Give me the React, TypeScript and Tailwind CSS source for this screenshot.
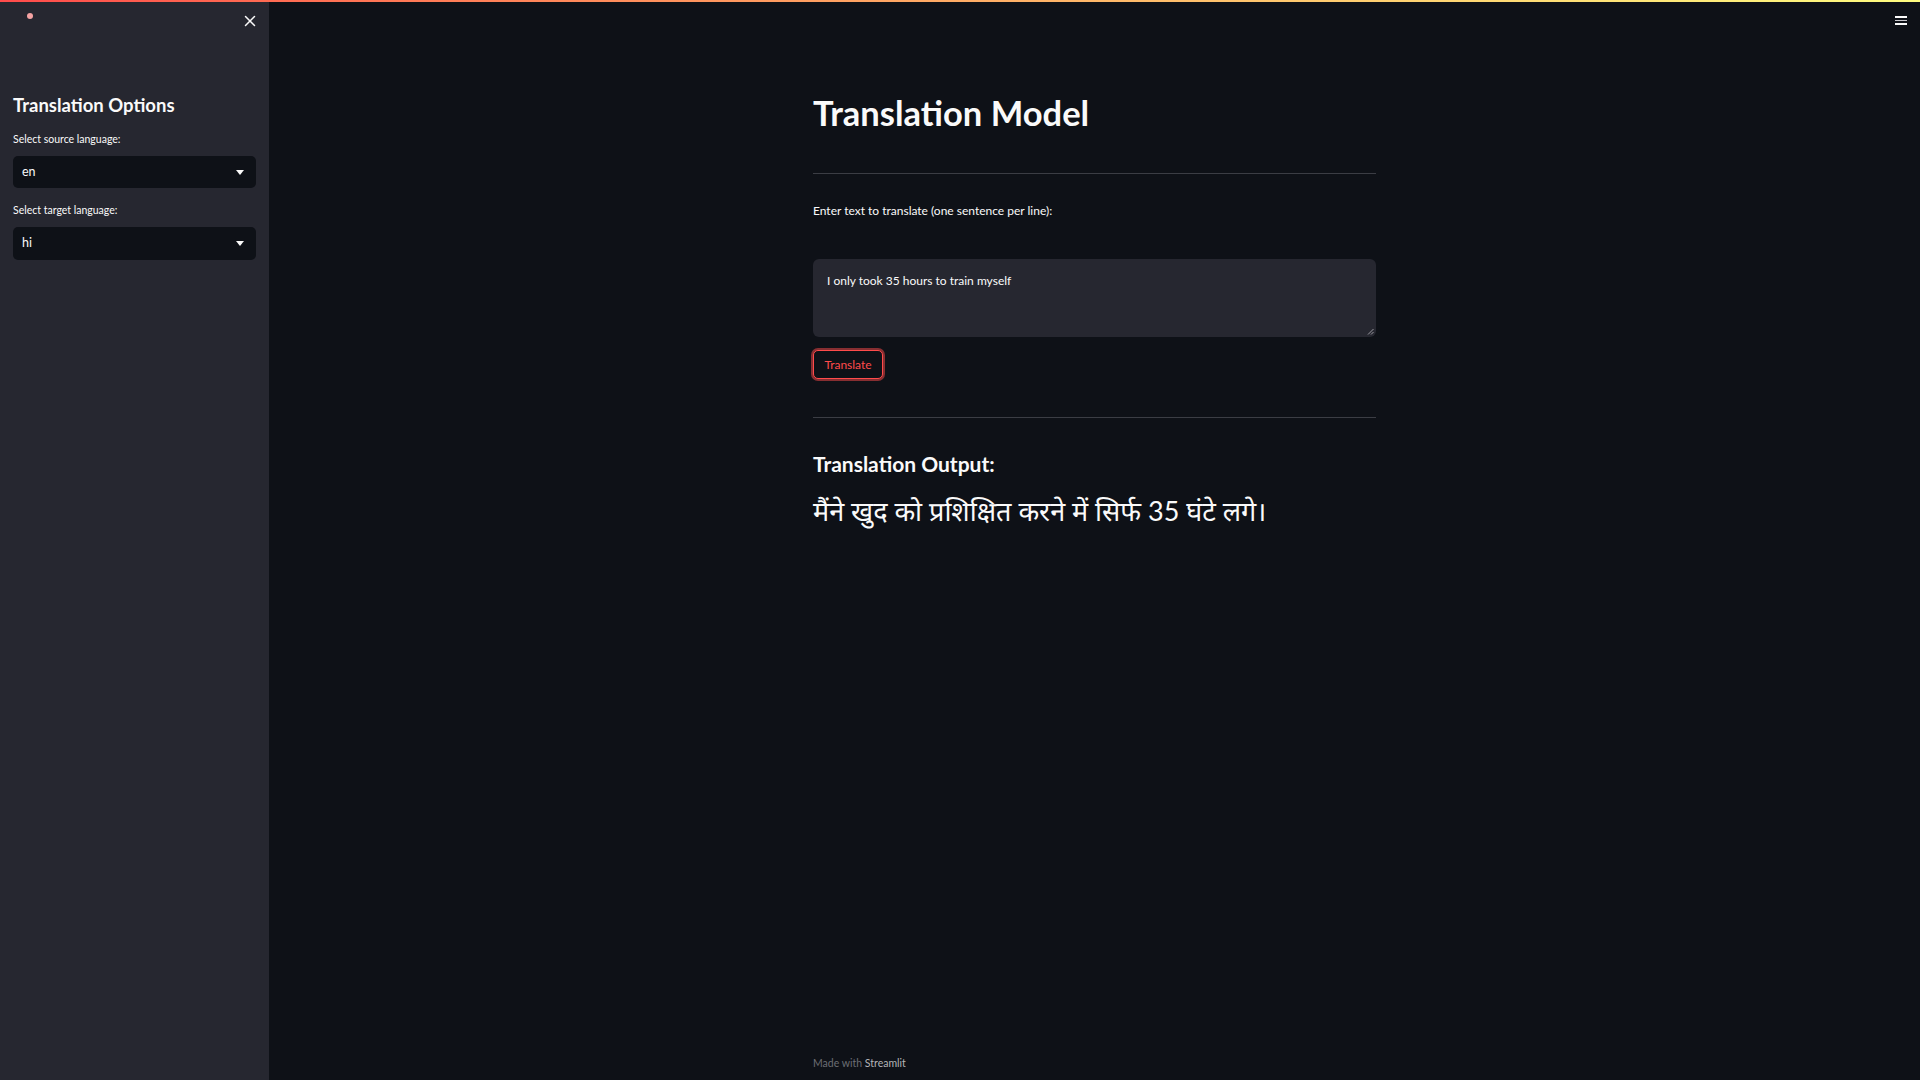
import { X } from 'lucide-react';

const FONT = "font-['Lato','Noto_Sans_Devanagari','Noto_Sans',sans-serif]";

function SelectBox({ value, tall }: { value: string; tall?: boolean }) {
  return (
    <div
      className={`flex ${tall ? 'h-[33px]' : 'h-[32px]'} items-center justify-between rounded-[5px] bg-[#0e1117] pl-[9px] pr-[12px] text-[12.5px] text-[#fafafa]`}
    >
      <span>{value}</span>
      <svg width="8" height="5" viewBox="0 0 8 5">
        <path d="M0 0h8L4 5z" fill="#fafafa" />
      </svg>
    </div>
  );
}

function Sidebar() {
  return (
    <aside className="flex w-[269px] shrink-0 flex-col bg-[#262730]">
      <div className="flex h-[40px] items-start justify-between pl-[27px] pr-[10px]">
        <div className="mt-[11px] h-[6px] w-[6px] rounded-full bg-[#f5a3a3]" />
        <X className="mt-[10px] text-[#fafafa]" size={18} strokeWidth={2} />
      </div>
      <div className="flex flex-col px-[13px]">
        <h2 className="mt-[52px] text-[18.5px] font-bold leading-[22px] text-[#fafafa]">Translation Options</h2>
        <label className="mt-[16px] text-[10.5px] leading-[14px] text-[#fafafa]">Select source language:</label>
        <div className="mt-[10px]">
          <SelectBox value="en" />
        </div>
        <label className="mt-[15px] text-[10.5px] leading-[14px] text-[#fafafa]">Select target language:</label>
        <div className="mt-[10px]">
          <SelectBox value="hi" tall />
        </div>
      </div>
    </aside>
  );
}

export default function App() {
  return (
    <div className={`flex h-screen w-full flex-col overflow-hidden bg-[#0e1117] ${FONT}`}>
      <div className="h-[2px] w-full shrink-0 bg-gradient-to-r from-[#ff4b4b] to-[#fffd80]" />
      <div className="flex flex-1">
        <Sidebar />
        <main className="relative flex flex-1 flex-col">
          <div className="absolute right-[13px] top-[14px] flex w-[12px] flex-col gap-[2px]">
            <span className="h-[1.5px] bg-[#fafafa]" />
            <span className="h-[1.5px] bg-[#c8c8cc]" />
            <span className="h-[1.5px] bg-[#fafafa]" />
          </div>

          <div className="mx-auto flex w-[563px] flex-1 flex-col">
            <h1 className="mt-[90px] text-[34.5px] font-bold leading-[41px] text-[#fafafa]">Translation Model</h1>
            <hr className="mt-[40px] border-0 border-t border-[#3b3d44]" />
            <label className="mt-[29px] text-[12px] leading-[16px] text-[#fafafa]">
              Enter text to translate (one sentence per line):
            </label>
            <div className="relative mt-[40px] h-[78px] rounded-[6px] bg-[#262730] px-[14px] pt-[14px] text-[12px] leading-[16px] text-[#fafafa]">
              I only took 35 hours to train myself
              <svg className="absolute bottom-[2px] right-[2px]" width="7" height="7" viewBox="0 0 7 7">
                <path d="M6.5 1L1 6.5M6.5 4L4 6.5" stroke="#9a9aa0" strokeWidth="1" />
              </svg>
            </div>
            <div className="mt-[13px]">
              <button className="flex h-[29px] w-[70px] items-center justify-center rounded-[5px] border-[1.5px] border-[#ff4b4b] bg-[#0e1117] text-[12px] text-[#ff4b4b] shadow-[0_0_0_2px_rgba(255,75,75,0.5)]">
                Translate
              </button>
            </div>
            <hr className="mt-[38px] border-0 border-t border-[#3b3d44]" />
            <h3 className="mt-[33px] text-[21px] font-bold leading-[25px] text-[#fafafa]">Translation Output:</h3>
            <p className="mt-[15px] text-[27px] leading-[40px] text-[#fafafa]">
              मैंने खुद को प्रशिक्षित करने में सिर्फ 35 घंटे लगे।
            </p>
            <footer className="mt-auto pb-[9px] text-[10.5px] leading-[16px] text-[#6c6e74]">
              Made with <span className="text-[#b4b5b8]">Streamlit</span>
            </footer>
          </div>
        </main>
      </div>
    </div>
  );
}
